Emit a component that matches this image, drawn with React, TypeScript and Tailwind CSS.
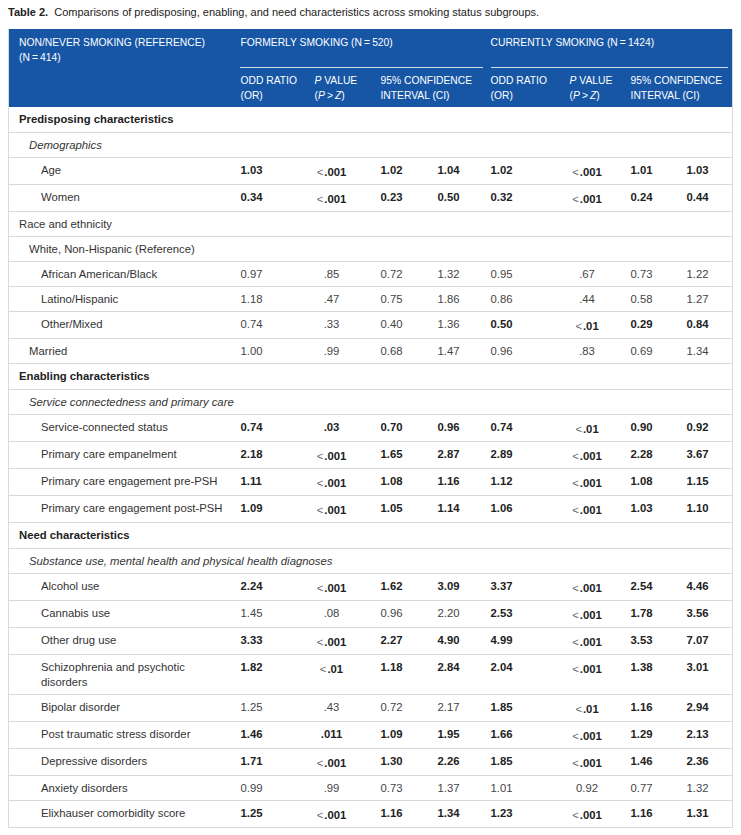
import type { ReactNode } from 'react'

type Val = string
// a trailing "*" marks a bold (significant) value
type Row =
  | { kind: 'section'; label: string }
  | { kind: 'sub'; label: string; level: 0 | 1; italic?: boolean }
  | { kind: 'item'; label: ReactNode; level: 1 | 2; v: Val[] }

const rows: Row[] = [
  { kind: 'section', label: 'Predisposing characteristics' },
  { kind: 'sub', label: 'Demographics', level: 1, italic: true },
  { kind: 'item', label: 'Age', level: 2, v: ['1.03*', '<.001', '1.02*', '1.04*', '1.02*', '<.001', '1.01*', '1.03*'] },
  { kind: 'item', label: 'Women', level: 2, v: ['0.34*', '<.001', '0.23*', '0.50*', '0.32*', '<.001', '0.24*', '0.44*'] },
  { kind: 'sub', label: 'Race and ethnicity', level: 0 },
  { kind: 'sub', label: 'White, Non-Hispanic (Reference)', level: 1 },
  { kind: 'item', label: 'African American/Black', level: 2, v: ['0.97', '.85', '0.72', '1.32', '0.95', '.67', '0.73', '1.22'] },
  { kind: 'item', label: 'Latino/Hispanic', level: 2, v: ['1.18', '.47', '0.75', '1.86', '0.86', '.44', '0.58', '1.27'] },
  { kind: 'item', label: 'Other/Mixed', level: 2, v: ['0.74', '.33', '0.40', '1.36', '0.50*', '<.01', '0.29*', '0.84*'] },
  { kind: 'item', label: 'Married', level: 1, v: ['1.00', '.99', '0.68', '1.47', '0.96', '.83', '0.69', '1.34'] },
  { kind: 'section', label: 'Enabling characteristics' },
  { kind: 'sub', label: 'Service connectedness and primary care', level: 1, italic: true },
  { kind: 'item', label: 'Service-connected status', level: 2, v: ['0.74*', '.03*', '0.70*', '0.96*', '0.74*', '<.01', '0.90*', '0.92*'] },
  { kind: 'item', label: 'Primary care empanelment', level: 2, v: ['2.18*', '<.001', '1.65*', '2.87*', '2.89*', '<.001', '2.28*', '3.67*'] },
  { kind: 'item', label: 'Primary care engagement pre-PSH', level: 2, v: ['1.11*', '<.001', '1.08*', '1.16*', '1.12*', '<.001', '1.08*', '1.15*'] },
  { kind: 'item', label: 'Primary care engagement post-PSH', level: 2, v: ['1.09*', '<.001', '1.05*', '1.14*', '1.06*', '<.001', '1.03*', '1.10*'] },
  { kind: 'section', label: 'Need characteristics' },
  { kind: 'sub', label: 'Substance use, mental health and physical health diagnoses', level: 1, italic: true },
  { kind: 'item', label: 'Alcohol use', level: 2, v: ['2.24*', '<.001', '1.62*', '3.09*', '3.37*', '<.001', '2.54*', '4.46*'] },
  { kind: 'item', label: 'Cannabis use', level: 2, v: ['1.45', '.08', '0.96', '2.20', '2.53*', '<.001', '1.78*', '3.56*'] },
  { kind: 'item', label: 'Other drug use', level: 2, v: ['3.33*', '<.001', '2.27*', '4.90*', '4.99*', '<.001', '3.53*', '7.07*'] },
  {
    kind: 'item',
    label: (
      <>
        Schizophrenia and psychotic
        <br />
        disorders
      </>
    ),
    level: 2,
    v: ['1.82*', '<.01', '1.18*', '2.84*', '2.04*', '<.001', '1.38*', '3.01*'],
  },
  { kind: 'item', label: 'Bipolar disorder', level: 2, v: ['1.25', '.43', '0.72', '2.17', '1.85*', '<.01', '1.16*', '2.94*'] },
  { kind: 'item', label: 'Post traumatic stress disorder', level: 2, v: ['1.46*', '.011*', '1.09*', '1.95*', '1.66*', '<.001', '1.29*', '2.13*'] },
  { kind: 'item', label: 'Depressive disorders', level: 2, v: ['1.71*', '<.001', '1.30*', '2.26*', '1.85*', '<.001', '1.46*', '2.36*'] },
  { kind: 'item', label: 'Anxiety disorders', level: 2, v: ['0.99', '.99', '0.73', '1.37', '1.01', '0.92', '0.77', '1.32'] },
  { kind: 'item', label: 'Elixhauser comorbidity score', level: 2, v: ['1.25*', '<.001', '1.16*', '1.34*', '1.23*', '<.001', '1.16*', '1.31*'] },
]

// P-value columns are centred a little left of the column middle, like the source
const cellPad = ['pl-2', 'pr-[16px] text-center', 'pl-2', 'pl-2', 'pl-2', 'pr-[10px] text-center', 'pl-2', 'pl-2']

function Value({ raw }: { raw: string }) {
  if (raw.startsWith('<')) {
    // "<" sits lower than the rest of the row and is set lighter
    return (
      <div className="pt-[2px]">
        <span className="mr-[1px] font-normal text-[#666]">&lt;</span>
        <span className="font-bold text-[#222]">{raw.slice(1)}</span>
      </div>
    )
  }
  const bold = raw.endsWith('*')
  const text = bold ? raw.slice(0, -1) : raw
  return <span className={bold ? 'font-bold text-[#222]' : 'text-[#444]'}>{text}</span>
}

const indent = { 0: 'pl-[10px]', 1: 'pl-[20px]', 2: 'pl-[32px]' } as const
const thin = '\u2009'

export default function App() {
  return (
    <div
      className="min-h-[835px] w-[741px] bg-white px-[8px] pt-[5px] text-[11.3px] leading-[15px] text-[#333]"
      style={{ fontFamily: '"Liberation Sans", Arial, sans-serif' }}
    >
      <p className="mb-[9px] text-[11px] text-[#222]">
        <span className="font-bold">Table 2.</span>&nbsp; Comparisons of predisposing, enabling, and need
        characteristics across smoking status subgroups.
      </p>

      <table className="w-[724px] table-fixed border-collapse border-x border-b border-[#d9d9d9]">
        <colgroup>
          <col className="w-[224px]" />
          <col className="w-[74px]" />
          <col className="w-[66px]" />
          <col className="w-[57px]" />
          <col className="w-[53px]" />
          <col className="w-[79px]" />
          <col className="w-[61px]" />
          <col className="w-[56px]" />
          <col className="w-[54px]" />
        </colgroup>
        <thead className="bg-[#1656a5] text-left text-[10.3px] uppercase text-white">
          <tr>
            <th className="pt-[6px] pb-[3px] pl-[10px] align-top font-normal">
              Non/never smoking (reference)
              <br />
              (N{thin}={thin}414)
            </th>
            <th colSpan={4} className="pt-[6px] pl-[7px] align-top font-normal">
              <div className="h-[33px] border-b border-white/80 pl-px">
                Formerly smoking (N{thin}={thin}520)
              </div>
            </th>
            <th colSpan={4} className="pt-[6px] pl-[8px] pr-[4px] align-top font-normal">
              <div className="h-[33px] border-b border-white/80">Currently smoking (N{thin}={thin}1424)</div>
            </th>
          </tr>
          <tr>
            <th className="pt-[5px] pb-[4px]" />
            {[0, 1].map((g) => (
              <SubHeads key={g} />
            ))}
          </tr>
        </thead>
        <tbody>
          {rows.map((r, i) => {
            if (r.kind === 'section')
              return (
                <tr key={i} className="border-b border-[#d9d9d9]">
                  <td colSpan={9} className="pl-[10px] pt-[5px] pb-[5px] font-bold text-[#222]">
                    {r.label}
                  </td>
                </tr>
              )
            if (r.kind === 'sub')
              return (
                <tr key={i} className="border-b border-[#d9d9d9]">
                  <td colSpan={9} className={`${indent[r.level]} pt-[5px] pb-[4px] ${r.italic ? 'italic' : ''}`}>
                    {r.label}
                  </td>
                </tr>
              )
            return (
              <tr key={i} className="border-b border-[#d9d9d9]">
                <td className={`${indent[r.level]} pt-[5px] pb-[4px] align-top`}>{r.label}</td>
                {r.v.map((raw, j) => (
                  <td key={j} className={`${cellPad[j]} pt-[5px] pb-[4px] align-top`}>
                    <Value raw={raw} />
                  </td>
                ))}
              </tr>
            )
          })}
        </tbody>
      </table>
    </div>
  )
}

function SubHeads() {
  return (
    <>
      <th className="pt-[5px] pb-[4px] pl-2 align-top font-normal">
        Odd ratio
        <br />
        (OR)
      </th>
      <th className="pt-[5px] pb-[4px] pl-2 align-top font-normal">
        <i>P</i> value
        <br />(<i>P</i>
        {thin}&gt;{thin}
        <i>Z</i>)
      </th>
      <th colSpan={2} className="pt-[5px] pb-[4px] pl-2 align-top font-normal">
        95% confidence
        <br />
        interval (CI)
      </th>
    </>
  )
}
